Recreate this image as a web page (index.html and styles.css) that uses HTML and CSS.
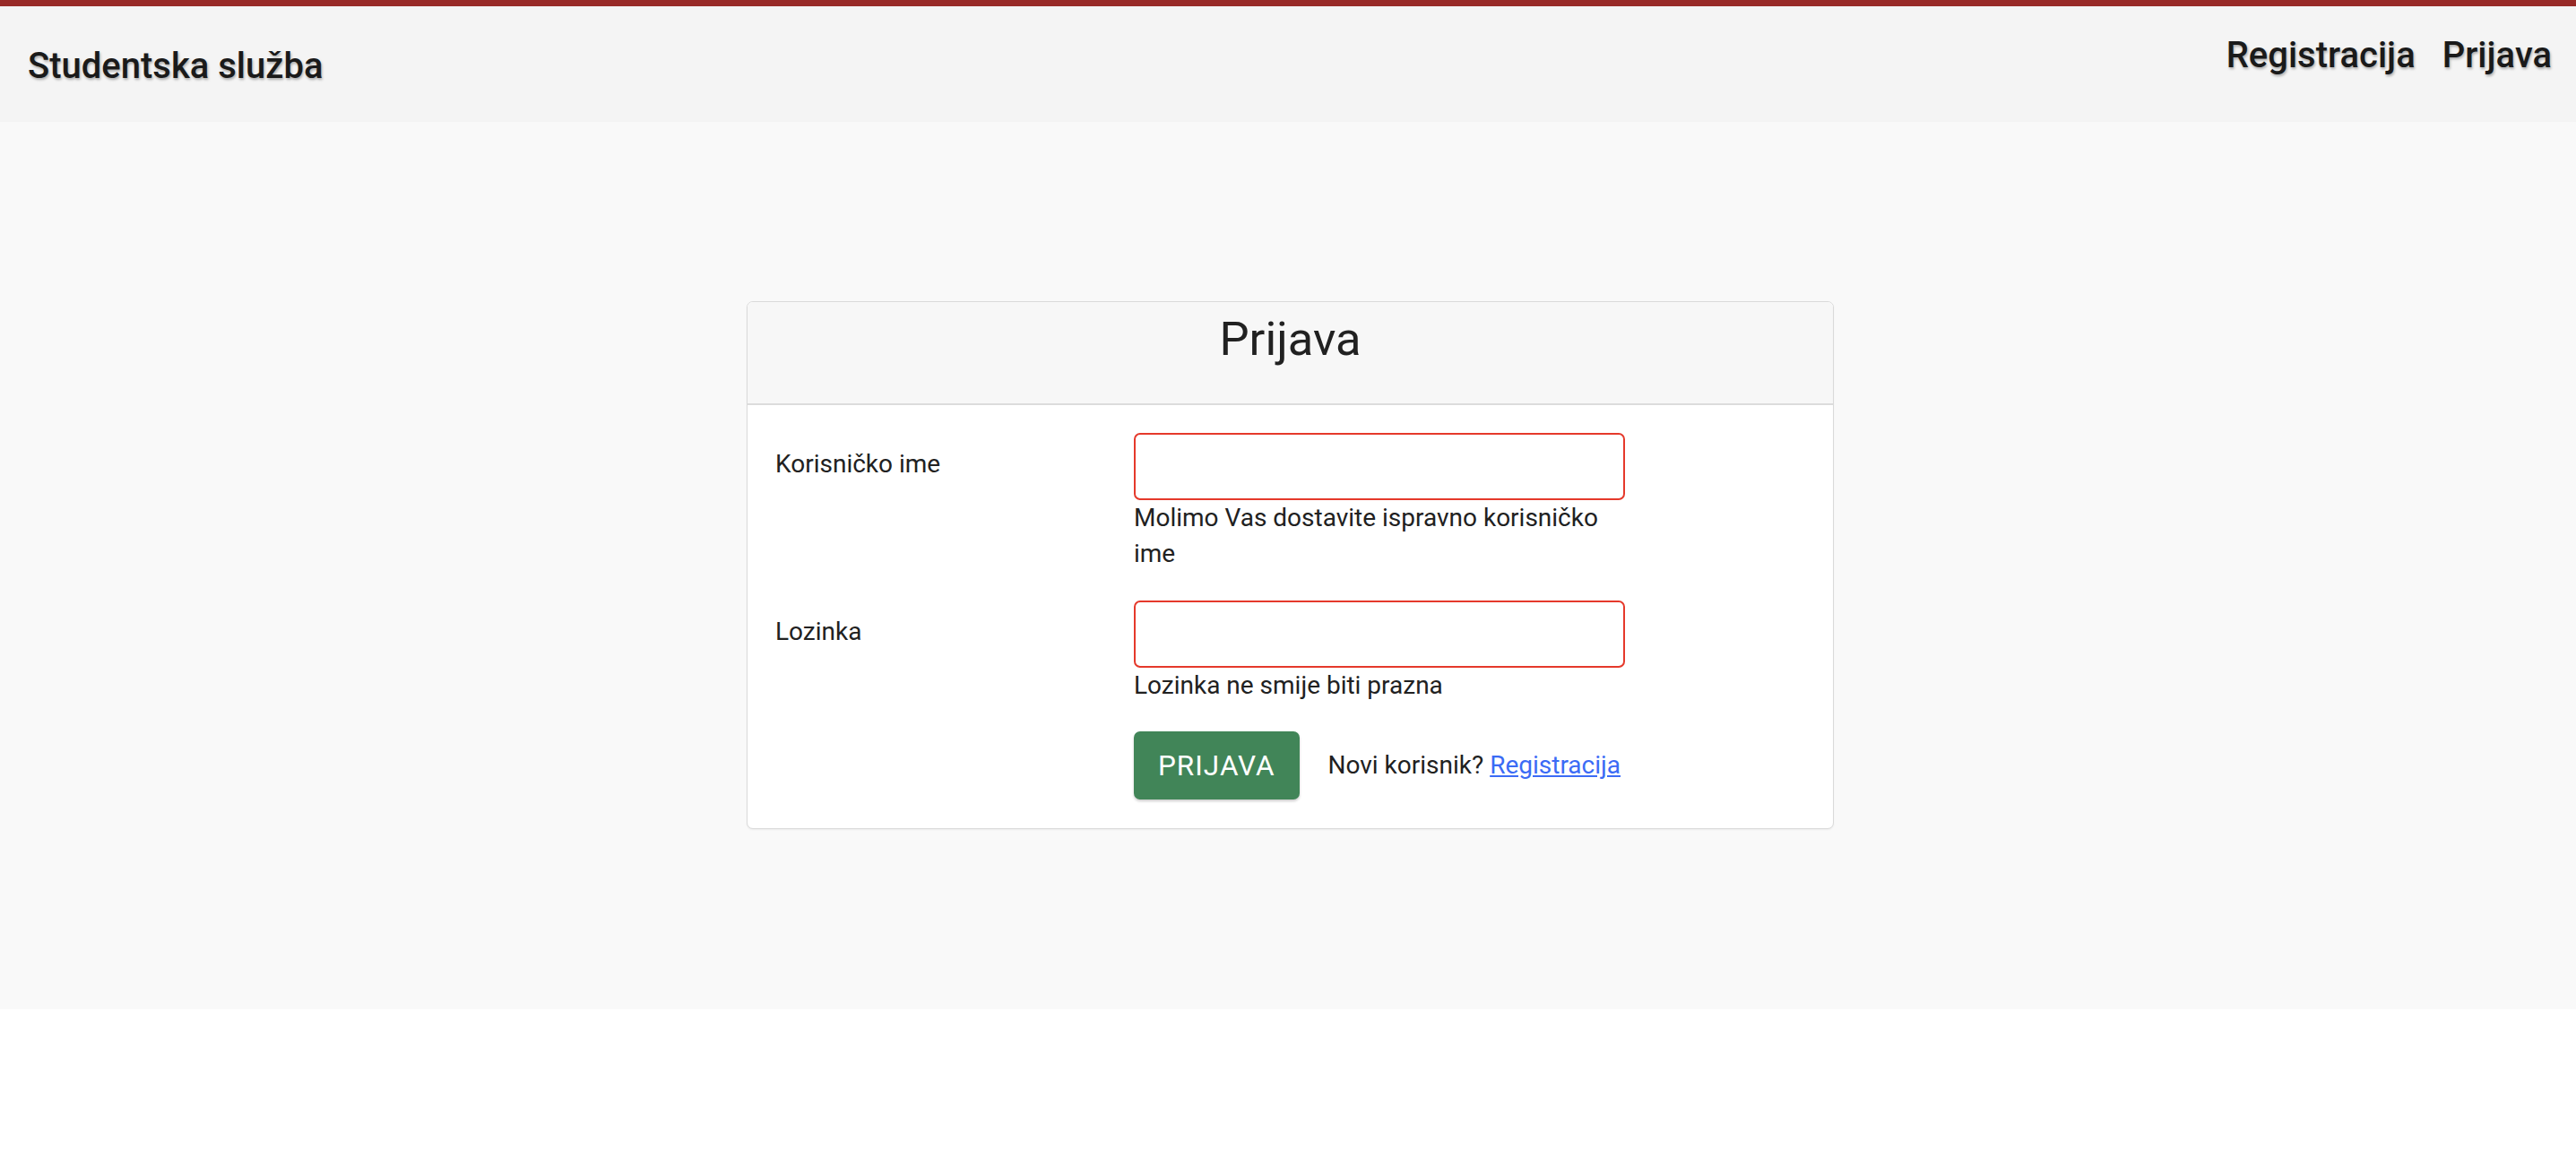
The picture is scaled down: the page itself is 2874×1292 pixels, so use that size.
FILE: index.html
```html
<!DOCTYPE html>
<html lang="hr">
<head>
<meta charset="utf-8">
<title>Studentska služba - Prijava</title>
<link rel="stylesheet" href="styles.css">
</head>
<body>
<header class="topbar">
  <a class="brand" href="#">Studentska služba</a>
  <nav class="nav">
    <a class="nav-link" href="#">Registracija</a>
    <a class="nav-link" href="#">Prijava</a>
  </nav>
</header>
<main class="main">
  <section class="card">
    <div class="card-header">
      <h2 class="card-title">Prijava</h2>
    </div>
    <form class="card-body">
      <div class="form-row">
        <label class="form-label" for="username">Korisničko ime</label>
        <div class="field">
          <input class="input invalid" id="username" type="text">
          <div class="error">Molimo Vas dostavite ispravno korisničko ime</div>
        </div>
      </div>
      <div class="form-row">
        <label class="form-label" for="password">Lozinka</label>
        <div class="field">
          <input class="input invalid" id="password" type="password">
          <div class="error">Lozinka ne smije biti prazna</div>
        </div>
      </div>
      <div class="form-row actions-row">
        <div class="form-label"></div>
        <div class="actions">
          <button class="btn" type="button">PRIJAVA</button>
          <span class="hint">Novi korisnik? <a class="link" href="#">Registracija</a></span>
        </div>
      </div>
    </form>
  </section>
</main>
</body>
</html>
```

FILE: styles.css
```css
* {
  box-sizing: border-box;
}

html, body {
  margin: 0;
  padding: 0;
  background: #ffffff;
  font-family: Roboto, "Noto Sans", "Liberation Sans", sans-serif;
  color: #212121;
}

.topbar {
  display: flex;
  justify-content: space-between;
  align-items: flex-start;
  height: 136px;
  background: #f4f4f4;
  border-top: 7px solid #982a27;
  padding: 0 27px 0 31px;
}

.brand {
  margin-top: 42px;
  font-size: 40px;
  line-height: 50px;
  font-weight: 500;
  color: #1a1a1a;
  text-decoration: none;
  text-shadow: 1px 2px 3px rgba(0, 0, 0, 0.3);
}

.nav {
  display: flex;
  gap: 30px;
  margin-top: 30px;
}

.nav-link {
  font-size: 40px;
  line-height: 50px;
  font-weight: 500;
  color: #1a1a1a;
  text-decoration: none;
  text-shadow: 1px 2px 3px rgba(0, 0, 0, 0.3);
}

.main {
  background: #f9f9f9;
  padding: 200px 0 201px 5px;
  display: flex;
  justify-content: center;
}

.card {
  width: 1213px;
  background: #ffffff;
  border: 1px solid #dadada;
  border-radius: 7px;
  box-shadow: 0 1px 2px rgba(0, 0, 0, 0.06);
  overflow: hidden;
}

.card-header {
  background: #f7f7f7;
  border-bottom: 2px solid #dcdcdc;
  padding: 10px 0 40px;
  text-align: center;
}

.card-title {
  margin: 0;
  font-size: 52.5px;
  line-height: 63px;
  font-weight: 400;
  color: #212121;
}

.card-body {
  padding: 31px 31px 32px;
  margin: 0;
}

.form-row {
  display: grid;
  grid-template-columns: 400px 548px;
  margin-bottom: 32px;
}

.actions-row {
  margin-bottom: 0;
  margin-top: -1px;
}

.form-label {
  font-size: 28px;
  line-height: 40px;
  padding-top: 15px;
  color: #212121;
}

.field {
  display: flex;
  flex-direction: column;
}

.input {
  display: block;
  width: 548px;
  height: 75px;
  margin: 0;
  padding: 0 20px;
  font: inherit;
  font-size: 28px;
  background: #ffffff;
  border: 2px solid #e5392b;
  border-radius: 7px;
  outline: none;
}

.error {
  font-size: 28px;
  line-height: 40px;
  color: #212121;
}

.actions {
  display: flex;
  align-items: center;
  gap: 32px;
}

.btn {
  font-family: Roboto, "Noto Sans", "Liberation Sans", sans-serif;
  font-size: 31.5px;
  line-height: 47px;
  font-weight: 400;
  letter-spacing: 1px;
  color: #ffffff;
  background: #418558;
  border: none;
  border-radius: 7px;
  padding: 14.5px 27px;
  box-shadow: 0 2px 3px rgba(0, 0, 0, 0.2);
  cursor: pointer;
}

.hint {
  font-size: 28px;
  line-height: 40px;
  color: #212121;
}

.link {
  color: #3b6bf5;
  text-decoration: underline;
}
```
